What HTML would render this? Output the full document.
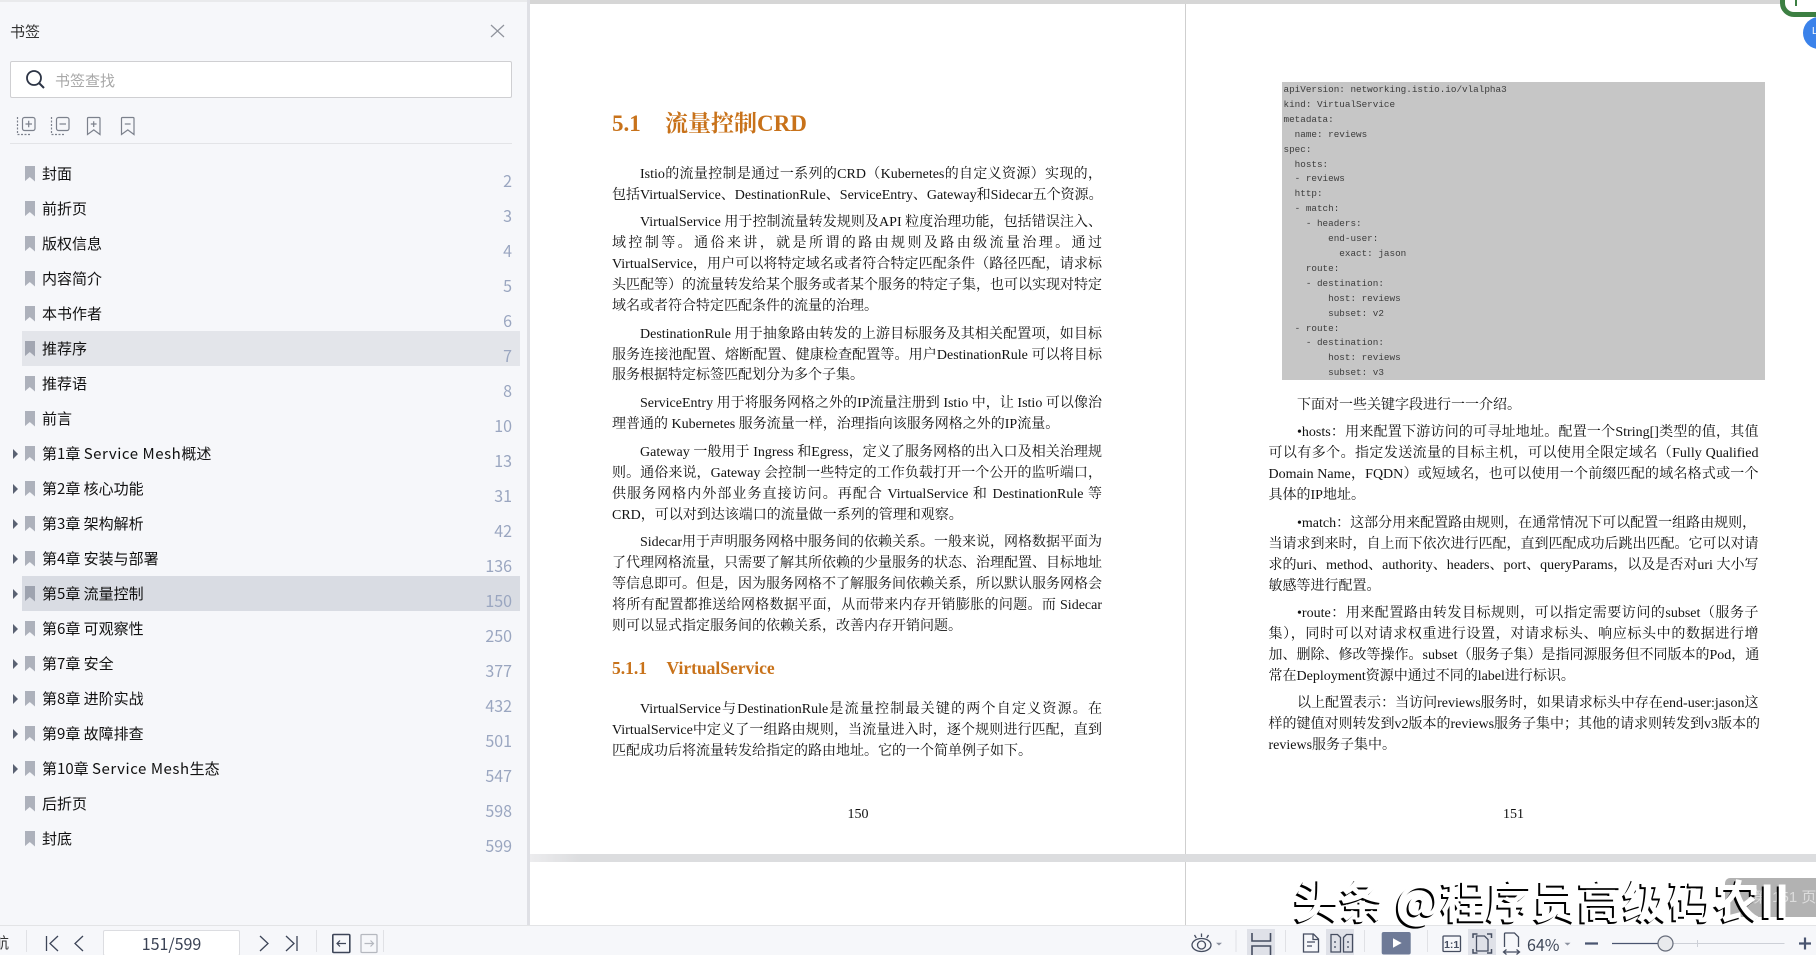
<!DOCTYPE html>
<html lang="zh"><head><meta charset="utf-8"><title>书签</title>
<style>
html,body{margin:0;padding:0;background:#fff}
#app{position:relative;width:1816px;height:955px;overflow:hidden;background:#fff;font-family:"Liberation Sans","Noto Sans CJK SC",sans-serif}
.abs{position:absolute}
#side{position:absolute;left:0;top:0;width:527px;height:925px;background:#f6f7fa}
#strip{position:absolute;left:527px;top:0;width:3px;height:925px;background:#dfe0e5}
.row{position:absolute;left:42px;font:15px/20px "Noto Sans CJK SC",sans-serif;color:#111;white-space:nowrap}
.row span{letter-spacing:.55px}
.bm{position:absolute;left:24.5px;width:10.5px;height:16px;margin-top:-.5px;background:#adb1bb;clip-path:polygon(0 0,100% 0,100% 100%,50% 72%,0 100%)}
.ar{position:absolute;left:13px;width:0;height:0;border-left:5px solid #5a6272;border-top:5px solid transparent;border-bottom:5px solid transparent}
.pn{position:absolute;right:15px;margin-top:-2px;font:16px/20px "Noto Sans CJK SC",sans-serif;color:#9aa6c0;white-space:nowrap}
#pages{position:absolute;left:0;top:0;width:1816px;height:925px;filter:blur(.35px);font-family:"Liberation Serif","Noto Serif CJK SC",serif;color:#111}
.j,.l{position:absolute;font-size:14px;line-height:21px;white-space:nowrap;margin-top:1px}
.j{text-align:justify;text-align-last:justify}
.a{left:612px;width:490px}.ai{left:640px;width:462px}
.b{left:1268.5px;width:490px}.bi{left:1297px;width:461.5px}
.t{position:absolute;font-weight:bold;color:#c8721a;white-space:nowrap;margin-top:1px}
#code{position:absolute;left:1282px;top:82px;width:483px;height:298px;background:#c6c6c6}
#code pre{margin:0;position:absolute;left:1.5px;top:1px;font:9.3px/14.9px "Liberation Mono",monospace;color:#3c3c3c}
#bar{position:absolute;left:0;top:925px;width:1816px;height:30px;background:#f6f7fa;border-top:1px solid #e3e4e6;box-sizing:border-box}
#pg{position:absolute;left:103px;top:930px;width:137px;height:26px;background:#fff;border:1px solid #dcdde1;border-radius:2px;box-sizing:border-box;text-align:center;font:16px/25px "Noto Sans CJK SC",sans-serif;color:#3a4254}
</style></head><body>
<div id="app">
<div class="abs" style="left:530px;top:0;width:1286px;height:4px;background:#d6d6d6"></div>
<div class="abs" style="left:1185px;top:4px;width:1px;height:850px;background:#cfcfcf"></div>
<div class="abs" style="left:1185px;top:862px;width:1px;height:63px;background:#cfcfcf"></div>
<div class="abs" style="left:530px;top:854px;width:1286px;height:8px;background:linear-gradient(90deg,#ececee,#dcdddf 4%)"></div>

<div id="pages">
<div class="t" style="left:612px;top:108px;font-size:23px;line-height:30px">5.1</div>
<div class="t" style="left:665px;top:108px;font-size:23px;line-height:30px">流量控制CRD</div>
<div class="j ai" style="top:162.5px">Istio的流量控制是通过一系列的CRD（Kubernetes的自定义资源）实现的，</div>
<div class="l a" style="top:183.5px">包括VirtualService、DestinationRule、ServiceEntry、Gateway和Sidecar五个资源。</div>
<div class="j ai" style="top:210.5px">VirtualService 用于控制流量转发规则及API 粒度治理功能，包括错误注入、</div>
<div class="j a" style="top:231.5px">域控制等。通俗来讲，就是所谓的路由规则及路由级流量治理。通过</div>
<div class="j a" style="top:252.5px">VirtualService，用户可以将特定域名或者符合特定匹配条件（路径匹配，请求标</div>
<div class="j a" style="top:273.5px">头匹配等）的流量转发给某个服务或者某个服务的特定子集，也可以实现对特定</div>
<div class="l a" style="top:294.5px">域名或者符合特定匹配条件的流量的治理。</div>
<div class="j ai" style="top:322.5px">DestinationRule 用于抽象路由转发的上游目标服务及其相关配置项，如目标</div>
<div class="j a" style="top:343.5px">服务连接池配置、熔断配置、健康检查配置等。用户DestinationRule 可以将目标</div>
<div class="l a" style="top:364px">服务根据特定标签匹配划分为多个子集。</div>
<div class="j ai" style="top:391.5px">ServiceEntry 用于将服务网格之外的IP流量注册到 Istio 中，让 Istio 可以像治</div>
<div class="l a" style="top:412.5px">理普通的 Kubernetes 服务流量一样，治理指向该服务网格之外的IP流量。</div>
<div class="j ai" style="top:440.5px">Gateway 一般用于 Ingress 和Egress，定义了服务网格的出入口及相关治理规</div>
<div class="j a" style="top:461.5px">则。通俗来说，Gateway 会控制一些特定的工作负载打开一个公开的监听端口，</div>
<div class="j a" style="top:482.5px">供服务网格内外部业务直接访问。再配合 VirtualService 和 DestinationRule 等</div>
<div class="l a" style="top:503.5px">CRD，可以对到达该端口的流量做一系列的管理和观察。</div>
<div class="j ai" style="top:530.5px">Sidecar用于声明服务网格中服务间的依赖关系。一般来说，网格数据平面为</div>
<div class="j a" style="top:551.5px">了代理网格流量，只需要了解其所依赖的少量服务的状态、治理配置、目标地址</div>
<div class="j a" style="top:572.5px">等信息即可。但是，因为服务网格不了解服务间依赖关系，所以默认服务网格会</div>
<div class="j a" style="top:593.5px">将所有配置都推送给网格数据平面，从而带来内存开销膨胀的问题。而 Sidecar</div>
<div class="l a" style="top:614.5px">则可以显式指定服务间的依赖关系，改善内存开销问题。</div>
<div class="t" style="left:612px;top:655.5px;font-size:17.5px;line-height:22px">5.1.1</div>
<div class="t" style="left:666.5px;top:655.5px;font-size:17.5px;line-height:22px">VirtualService</div>
<div class="j ai" style="top:697.5px">VirtualService与DestinationRule是流量控制最关键的两个自定义资源。在</div>
<div class="j a" style="top:718.5px">VirtualService中定义了一组路由规则，当流量进入时，逐个规则进行匹配，直到</div>
<div class="l a" style="top:739.5px">匹配成功后将流量转发给指定的路由地址。它的一个简单例子如下。</div>
<div class="l" style="left:847.5px;top:803px">150</div>

<div id="code"><pre>apiVersion: networking.istio.io/vlalpha3
kind: VirtualService
metadata:
  name: reviews
spec:
  hosts:
  - reviews
  http:
  - match:
    - headers:
        end-user:
          exact: jason
    route:
    - destination:
        host: reviews
        subset: v2
  - route:
    - destination:
        host: reviews
        subset: v3</pre></div>
<div class="l bi" style="left:1297px;top:393.5px">下面对一些关键字段进行一一介绍。</div>
<div class="j bi" style="top:420.5px">•hosts：用来配置下游访问的可寻址地址。配置一个String[]类型的值，其值</div>
<div class="j b" style="top:441.5px">可以有多个。指定发送流量的目标主机，可以使用全限定域名（Fully Qualified</div>
<div class="j b" style="top:462.5px">Domain Name，FQDN）或短域名，也可以使用一个前缀匹配的域名格式或一个</div>
<div class="l b" style="top:483.5px">具体的IP地址。</div>
<div class="l bi" style="top:511.5px;width:454px;text-align:justify;text-align-last:justify">•match：这部分用来配置路由规则，在通常情况下可以配置一组路由规则，</div>
<div class="j b" style="top:532.5px">当请求到来时，自上而下依次进行匹配，直到匹配成功后跳出匹配。它可以对请</div>
<div class="j b" style="top:553.5px">求的uri、method、authority、headers、port、queryParams，以及是否对uri 大小写</div>
<div class="l b" style="top:574.5px">敏感等进行配置。</div>
<div class="j bi" style="top:601.5px">•route：用来配置路由转发目标规则，可以指定需要访问的subset（服务子</div>
<div class="j b" style="top:622.5px">集），同时可以对请求权重进行设置，对请求标头、响应标头中的数据进行增</div>
<div class="j b" style="top:643.5px">加、删除、修改等操作。subset（服务子集）是指同源服务但不同版本的Pod，通</div>
<div class="l b" style="top:664.5px">常在Deployment资源中通过不同的label进行标识。</div>
<div class="j bi" style="top:691.5px">以上配置表示：当访问reviews服务时，如果请求标头中存在end-user:jason这</div>
<div class="j b" style="top:712.5px">样的键值对则转发到v2版本的reviews服务子集中；其他的请求则转发到v3版本的</div>
<div class="l b" style="top:733.5px">reviews服务子集中。</div>
<div class="l" style="left:1503px;top:803px">151</div>
</div>

<!-- top-right -->
<div class="abs" style="left:1779.5px;top:-20px;width:60px;height:37px;border:5px solid #3c7f42;border-radius:14px;box-sizing:border-box;background:#fff"></div>
<div class="abs" style="left:1795px;top:0;width:1.5px;height:6px;background:#3c7f42"></div>
<div class="abs" style="left:1803px;top:17px;width:32px;height:32px;border-radius:50%;background:#3b82ea"></div>
<div class="abs" style="left:1812px;top:26px;font:10px/12px 'Liberation Sans',sans-serif;color:#fff">L</div>

<!-- sidebar -->
<div id="side">
<div class="abs" style="left:0;top:0;width:527px;height:2px;background:#e9eaec"></div>
<div class="abs" style="left:10px;top:21px;font:15px/22px 'Noto Sans CJK SC',sans-serif;color:#333">书签</div>
<div class="abs" style="left:10px;top:61px;width:502px;height:37px;background:#fff;border:1px solid #cfcfd2;border-radius:2px;box-sizing:border-box"></div>
<div class="abs" style="left:55px;top:70px;font:15px/22px 'Noto Sans CJK SC',sans-serif;color:#a8a8a8">书签查找</div>
<div class="abs" style="left:10px;top:143px;width:502px;height:1px;background:#e3e4e7"></div>
<div class="abs" style="left:22px;top:331px;width:498px;height:35px;background:#e3e5ea"></div>
<div class="abs" style="left:22px;top:576px;width:498px;height:35px;background:#d9dce3"></div>

<div class="bm" style="top:166px"></div><div class="row" style="top:163.5px">封面</div><div class="pn" style="top:171.5px">2</div>
<div class="bm" style="top:201px"></div><div class="row" style="top:198.5px">前折页</div><div class="pn" style="top:206.5px">3</div>
<div class="bm" style="top:236px"></div><div class="row" style="top:233.5px">版权信息</div><div class="pn" style="top:241.5px">4</div>
<div class="bm" style="top:271px"></div><div class="row" style="top:268.5px">内容简介</div><div class="pn" style="top:276.5px">5</div>
<div class="bm" style="top:306px"></div><div class="row" style="top:303.5px">本书作者</div><div class="pn" style="top:311.5px">6</div>
<div class="bm" style="top:341px;background:#a2a6b1"></div><div class="row" style="top:338.5px">推荐序</div><div class="pn" style="top:346.5px">7</div>
<div class="bm" style="top:376px"></div><div class="row" style="top:373.5px">推荐语</div><div class="pn" style="top:381.5px">8</div>
<div class="bm" style="top:411px"></div><div class="row" style="top:408.5px">前言</div><div class="pn" style="top:416.5px">10</div>
<div class="ar" style="top:448.5px"></div><div class="bm" style="top:446px"></div><div class="row" style="top:443.5px">第1章 <span>Service Mesh</span>概述</div><div class="pn" style="top:451.5px">13</div>
<div class="ar" style="top:483.5px"></div><div class="bm" style="top:481px"></div><div class="row" style="top:478.5px">第2章 核心功能</div><div class="pn" style="top:486.5px">31</div>
<div class="ar" style="top:518.5px"></div><div class="bm" style="top:516px"></div><div class="row" style="top:513.5px">第3章 架构解析</div><div class="pn" style="top:521.5px">42</div>
<div class="ar" style="top:553.5px"></div><div class="bm" style="top:551px"></div><div class="row" style="top:548.5px">第4章 安装与部署</div><div class="pn" style="top:556.5px">136</div>
<div class="ar" style="top:588.5px"></div><div class="bm" style="top:586px;background:#9ea3af"></div><div class="row" style="top:583.5px">第5章 流量控制</div><div class="pn" style="top:591.5px">150</div>
<div class="ar" style="top:623.5px"></div><div class="bm" style="top:621px"></div><div class="row" style="top:618.5px">第6章 可观察性</div><div class="pn" style="top:626.5px">250</div>
<div class="ar" style="top:658.5px"></div><div class="bm" style="top:656px"></div><div class="row" style="top:653.5px">第7章 安全</div><div class="pn" style="top:661.5px">377</div>
<div class="ar" style="top:693.5px"></div><div class="bm" style="top:691px"></div><div class="row" style="top:688.5px">第8章 进阶实战</div><div class="pn" style="top:696.5px">432</div>
<div class="ar" style="top:728.5px"></div><div class="bm" style="top:726px"></div><div class="row" style="top:723.5px">第9章 故障排查</div><div class="pn" style="top:731.5px">501</div>
<div class="ar" style="top:763.5px"></div><div class="bm" style="top:761px"></div><div class="row" style="top:758.5px">第10章 <span>Service Mesh</span>生态</div><div class="pn" style="top:766.5px">547</div>
<div class="bm" style="top:796px"></div><div class="row" style="top:793.5px">后折页</div><div class="pn" style="top:801.5px">598</div>
<div class="bm" style="top:831px"></div><div class="row" style="top:828.5px">封底</div><div class="pn" style="top:836.5px">599</div>
</div>
<div id="strip"></div>

<!-- bottom bar -->
<div id="bar">
<div class="abs" style="left:-6px;top:6px;font:15px/22px 'Noto Sans CJK SC',sans-serif;color:#333">航</div>
<div class="abs" style="left:1247px;top:3px;width:28px;height:27px;background:#dfe1e8"></div>
<div class="abs" style="left:1326px;top:3px;width:28px;height:27px;background:#dfe1e8"></div>
<div class="abs" style="left:1468px;top:3px;width:28px;height:27px;background:#dfe1e8"></div>
<div class="abs" style="left:1527px;top:7px;font:16px/22px 'Noto Sans CJK SC',sans-serif;color:#3d4657">64%</div>
</div>
<div id="pg">151/599</div>

<!-- floating page tip + watermark -->
<div class="abs" style="left:1725px;top:878px;width:91px;height:39px;border-radius:5px 0 0 5px;background:#b2b2b2;color:#dcdcdc;font:15px/39px 'Liberation Sans','Noto Sans CJK SC',sans-serif;padding-left:28px;box-sizing:border-box;white-space:nowrap">第 151 页</div>
<div class="abs" style="left:1294px;top:868px;font:700 45.5px/62px 'Noto Sans CJK SC',sans-serif;color:#fff;text-shadow:-2px 2px 0 #000;white-space:nowrap">头条 @程序员高级码农II</div>

<svg class="abs" style="left:0;top:0" width="1816" height="955" viewBox="0 0 1816 955" fill="none">
<!-- sidebar header icons -->
<path d="M491 25L504 37M504 25L491 37" stroke="#8f939c" stroke-width="1.2"/>
<circle cx="34" cy="78" r="7" stroke="#2c3445" stroke-width="1.8"/>
<path d="M39 83L44 88" stroke="#2c3445" stroke-width="2"/>
<g stroke="#7c818c" stroke-width="1.2">
<rect x="22.5" y="117.5" width="12.5" height="13" rx="2"/>
<path d="M25.5 124h6.5M28.7 120.8v6.5"/>
<path d="M17.5 117v17.5H30" stroke-dasharray="2 1.5"/>
<rect x="56.5" y="117.5" width="12.5" height="13" rx="2"/>
<path d="M59.5 124h6.5"/>
<path d="M51.5 117v17.5H64" stroke-dasharray="2 1.5"/>
<path d="M87.5 118.5q0-1 1-1h10.5q1 0 1 1v16l-6.2-4.6-6.3 4.6z"/>
<path d="M90.8 124h5.8M93.7 121.2v5.8"/>
<path d="M121.5 118.5q0-1 1-1h10.5q1 0 1 1v16l-6.2-4.6-6.3 4.6z"/>
<path d="M124.8 124h5.8"/>
</g>
<!-- bottom left nav -->
<g stroke="#e0e1e5"><path d="M26.5 930v22M316.5 930v22M383.5 930v22M1236 930v22M1285.5 930v22M1364.5 930v22M1427.5 930v22"/></g>
<g stroke="#3d4558" stroke-width="1.3">
<path d="M46.5 936v15M58 936l-8 7.5 8 7.5"/>
<path d="M83 936l-8 7.5 8 7.5"/>
<path d="M260 936l8 7.5-8 7.5"/>
<path d="M286 936l8 7.5-8 7.5M297 936v15"/>
<rect x="332.8" y="934.5" width="17" height="18" rx="1" stroke-width="1.6"/>
<path d="M346 943.5h-9M340 940.5l-3 3 3 3" stroke-width="1.2"/>
</g>
<g stroke="#b5b8bf" stroke-width="1.3">
<rect x="361" y="934.5" width="16" height="18" rx="1"/>
<path d="M364.5 943.5h9M370.5 940.5l3 3-3 3" stroke-width="1.2"/>
</g>
<!-- bottom right icons -->
<g stroke="#454d60" stroke-width="1.3">
<ellipse cx="1201.5" cy="945" rx="9.5" ry="6.5"/>
<circle cx="1201.5" cy="945" r="4"/>
<path d="M1201.5 933.5v3.5M1194.5 935l1.8 3M1208.5 935l-1.8 3"/>
<path d="M1252 933v8h18.5v-8M1252 955v-9h18.5v9" stroke-width="1.6"/>
<path d="M1303.5 934h10l5 5v13h-15zM1313 934v5.5h5.5M1307 942h8M1307 946h5"/>
<path d="M1331 934.5h6.5l3 3v14.5h-9.5zM1343.5 937.5l3-3h6v17.5h-9zM1335 941v2M1335 946v2M1348 941v2M1348 946v2"/>
<rect x="1443" y="936" width="17.5" height="15.5" rx="1"/>
<path d="M1476.5 936h8l3.5 3.5v11.5h-11.5z"/>
<path d="M1473 938v-4h4.5M1487 934h4.5v4M1473 949v4h4.5M1487 953h4.5v-4" stroke-width="1.5"/>
<path d="M1504.5 947v-13q0-1 1-1h9l4 4v10M1503.5 952h16M1506.5 949.5l-3 2.5 3 2.5M1516.5 949.5l3 2.5-3 2.5"/>
</g>
<text x="1451.7" y="948" font-family="Liberation Sans, sans-serif" font-size="10.5" font-weight="bold" fill="#454d60" text-anchor="middle">1:1</text>
<path d="M1216 942.7h6l-3 2.8z" fill="#8a909e"/>
<rect x="1381.7" y="932" width="29" height="22.5" rx="2" fill="#6e7a97"/>
<path d="M1393 938.3l8.7 4.7-8.7 4.7z" fill="#fff"/>
<path d="M1564.5 942.7h6l-3 2.8z" fill="#8a909e"/>
<path d="M1585 943.5h13M1799 943.5h12M1805 937.5v12" stroke="#4a5570" stroke-width="2.2"/>
<path d="M1612 943.5h54" stroke="#4a5570" stroke-width="1.3"/>
<path d="M1666 943.5h118.5M1697.5 940v7" stroke="#cdd0d7" stroke-width="1"/>
<circle cx="1665.5" cy="943.5" r="7.5" fill="#e9eaed" stroke="#666c7a" stroke-width="1.2"/>
</svg>
</div>
</body></html>
